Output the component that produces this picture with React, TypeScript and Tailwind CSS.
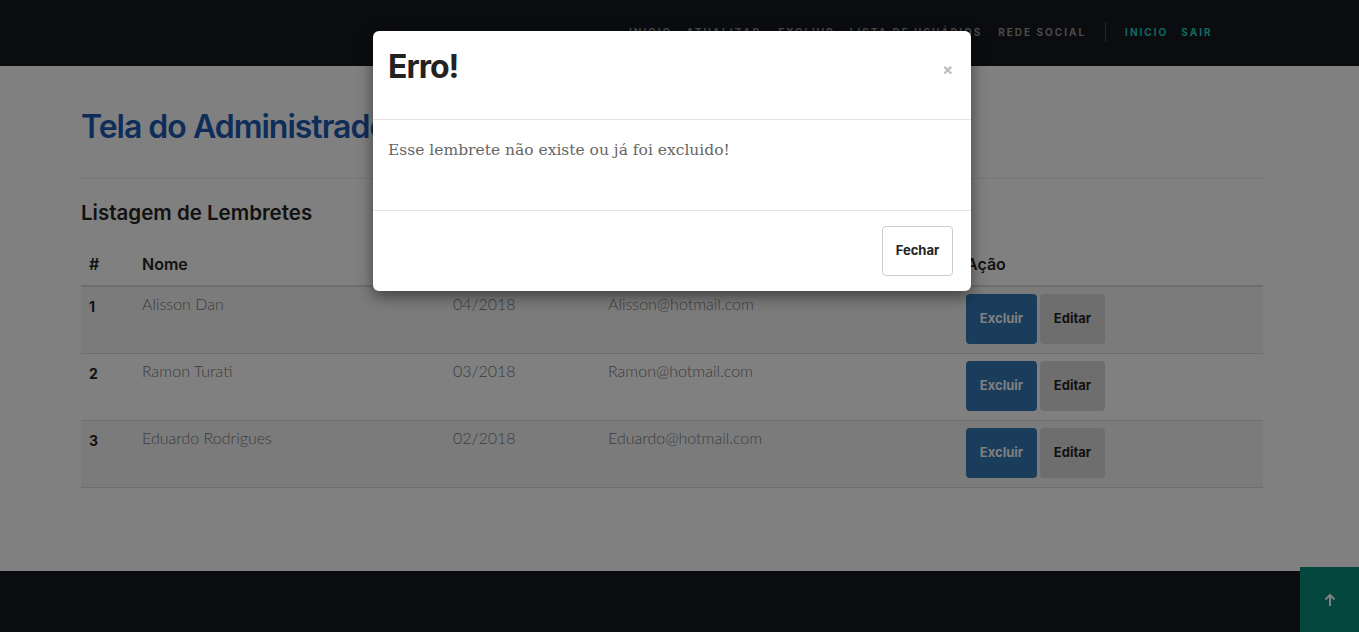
import React from "react";

const rows = [
  { id: 1, nome: "Alisson Dan", data: "04/2018", email: "Alisson@hotmail.com" },
  { id: 2, nome: "Ramon Turati", data: "03/2018", email: "Ramon@hotmail.com" },
  { id: 3, nome: "Eduardo Rodrigues", data: "02/2018", email: "Eduardo@hotmail.com" },
];

const head = { fontFamily: "Inter, 'Noto Sans', sans-serif" };
const body = { fontFamily: "Lato, 'Noto Sans', sans-serif" };

export default function App() {
  return (
    <div className="relative h-[632px] w-full overflow-hidden bg-[#808080]" style={head}>
      {/* NAV (dimmed by the open modal's backdrop) */}
      <nav className="h-[66px] bg-[#0b0c10] flex items-center">
        <div className="ml-[629px] -mt-[2px] flex items-center text-[10px] font-bold tracking-[2px] text-[#4b4b4b]">
          <span className="mr-[14px]">INICIO</span>
          <span className="mr-[17px]">ATUALIZAR</span>
          <span className="mr-[15px]">EXCLUIR</span>
          <span className="mr-[16px]">LISTA DE USUÁRIOS</span>
          <span>REDE SOCIAL</span>
          <span className="mx-[19px] h-[20px] w-px bg-[#25262b]" />
          <span className="mr-[13px] text-[#0f6b5f]">INICIO</span>
          <span className="text-[#0f6b5f]">SAIR</span>
        </div>
      </nav>

      {/* MAIN */}
      <main className="h-[505px] px-[81px] pt-[40px]">
        <h1 className="text-[32px] font-semibold leading-[42px] text-[#0e2d5a] tracking-[-1px]">
          Tela do Administrador
        </h1>
        <div className="mt-[30px] border-t border-[#777] w-[1182px]" />
        <h2 className="mt-[21px] text-[20.5px] font-semibold leading-[26px] text-[#111]">
          Listagem de Lembretes
        </h2>
        <table className="mt-[18px] w-[1182px] border-collapse text-left">
          <thead>
            <tr className="border-b-2 border-[#6e6e6e] text-[16px] font-semibold text-[#111]">
              <th className="w-[53px] px-[8px] pt-[8px] pb-[9px] font-semibold">#</th>
              <th className="w-[311px] px-[8px] pt-[8px] pb-[9px] font-semibold">Nome</th>
              <th className="w-[155px] px-[8px] pt-[8px] pb-[9px] font-semibold">Data</th>
              <th className="w-[358px] px-[8px] pt-[8px] pb-[9px] font-semibold">Email</th>
              <th className="px-[8px] pt-[8px] pb-[9px] font-semibold">Ação</th>
            </tr>
          </thead>
          <tbody>
            {rows.map((r, i) => (
              <tr
                key={r.id}
                className={`h-[67px] border-b border-[#6e6e6e] align-top ${i % 2 === 0 ? "bg-[#7b7b7b]" : "bg-[#808080]"}`}
              >
                <td className="px-[8px] pt-[9px] text-[14px] font-bold text-[#111]">{r.id}</td>
                <td className="px-[8px] pt-[5px] text-[16px] font-light text-[#3b3b3b]" style={body}>{r.nome}</td>
                <td className="px-[8px] pt-[5px] text-[16px] font-light text-[#3b3b3b]" style={body}>{r.data}</td>
                <td className="px-[8px] pt-[5px] text-[16px] font-light text-[#3b3b3b]" style={body}>{r.email}</td>
                <td className="px-[8px] pt-[7px]">
                  <div className="flex gap-[3px]">
                    <button className="h-[50px] w-[71px] rounded-[4px] bg-[#1a3d5c] text-[13px] font-bold text-[#808080]">
                      Excluir
                    </button>
                    <button className="h-[50px] w-[65px] rounded-[4px] bg-[#6e6e6e] text-[13px] font-bold text-[#111]">
                      Editar
                    </button>
                  </div>
                </td>
              </tr>
            ))}
          </tbody>
        </table>
      </main>

      {/* FOOTER */}
      <footer className="h-[61px] bg-[#0b0c10]" />
      <button className="absolute right-0 bottom-0 flex h-[65px] w-[59px] items-center justify-center bg-[#03473f] text-[#808080]">
        <svg width="14" height="14" viewBox="0 0 14 14" fill="none" stroke="currentColor" strokeWidth="2">
          <path d="M7 13V2M2.5 6.5L7 2l4.5 4.5" />
        </svg>
      </button>

      {/* MODAL */}
      <div className="absolute left-[373px] top-[31px] w-[598px] rounded-[6px] bg-white shadow-[0_5px_15px_rgba(0,0,0,0.5)]">
        <div className="relative h-[89px] border-b border-[#e5e5e5] px-[15px] pt-[15px]">
          <h4 className="text-[32px] font-bold leading-[42px] text-[#222] tracking-[-1px]">Erro!</h4>
          <span className="absolute right-[18px] top-[28px] text-[16px] font-bold leading-[20px] text-[#bbb]">×</span>
        </div>
        <div className="h-[91px] border-b border-[#e5e5e5] px-[15px] pt-[17px]">
          <p className="text-[15.5px] leading-[26px] text-[#666]" style={{ fontFamily: "'DejaVu Serif', 'Liberation Serif', serif" }}>
            Esse lembrete não existe ou já foi excluido!
          </p>
        </div>
        <div className="flex justify-end pl-[15px] pr-[18px] py-[15px]">
          <button className="h-[50px] w-[71px] rounded-[4px] border border-[#ccc] bg-white text-[13px] font-bold text-[#222]">
            Fechar
          </button>
        </div>
      </div>
    </div>
  );
}
